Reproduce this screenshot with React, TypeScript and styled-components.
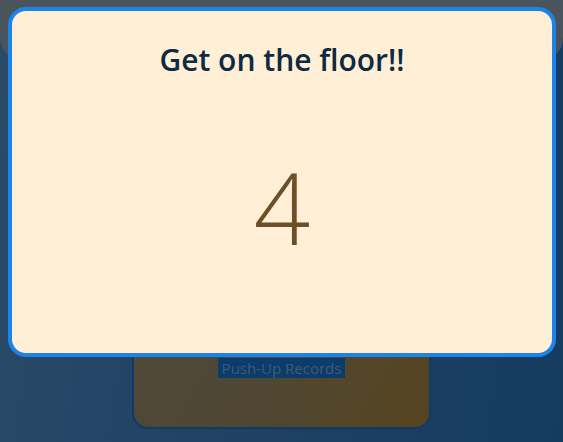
import React from "react";
import styled, { createGlobalStyle } from "styled-components";

const Global = createGlobalStyle`
  html, body { margin: 0; padding: 0; }
  body { font-family: "Open Sans", "Noto Sans", sans-serif; overflow: hidden; }
  * { box-sizing: border-box; }
`;

const Page = styled.div`
  width: 563px;
  height: 442px;
  background: linear-gradient(100deg, #2a4a68 0%, #1f4264 50%, #153b61 100%);
  display: flex;
  flex-direction: column;
  align-items: center;
`;

const Header = styled.header`
  align-self: stretch;
  height: 60px;
  background: #4a545d;
  border-radius: 0 0 22px 22px;
`;

const Card = styled.section`
  margin-top: 66px;
  width: 299px;
  height: 303px;
  border-radius: 16px;
  border: 2px solid #0f3a63;
  background: linear-gradient(120deg, #4e4a40 0%, #4f4733 60%, #57441f 100%);
  display: flex;
  flex-direction: column;
  align-items: center;
  justify-content: flex-end;
  padding-bottom: 49px;
`;

const CardLabel = styled.span`
  font-family: "Open Sans", sans-serif;
  font-size: 15px;
  line-height: 20px;
  color: #3f5b73;
  background: #0c3c6b;
  padding: 0 4px;
`;

const Overlay = styled.div`
  position: fixed;
  inset: 0;
  background: transparent;
`;

const Modal = styled.div`
  position: fixed;
  top: 7px;
  left: 8px;
  width: 548px;
  height: 350px;
  border: 4px solid #1a84e8;
  border-radius: 18px;
  background: #ffefd7;
  display: flex;
  flex-direction: column;
  align-items: center;
`;

const Title = styled.h2`
  margin: 31px 0 0;
  font-family: "Open Sans", sans-serif;
  font-weight: 600;
  font-size: 30px;
  line-height: 36px;
  color: #0e2a40;
`;

const Count = styled.div`
  margin-top: 74px;
  font-family: "Open Sans", sans-serif;
  font-weight: 300;
  font-size: 99px;
  line-height: 110px;
  color: #6b4f26;
`;

export default function App() {
  return (
    <>
      <Global />
      <Page>
        <Header />
        <Card>
          <CardLabel>Push-Up Records</CardLabel>
        </Card>
      </Page>
      <Overlay />
      <Modal>
        <Title>Get on the floor!!</Title>
        <Count>4</Count>
      </Modal>
    </>
  );
}
